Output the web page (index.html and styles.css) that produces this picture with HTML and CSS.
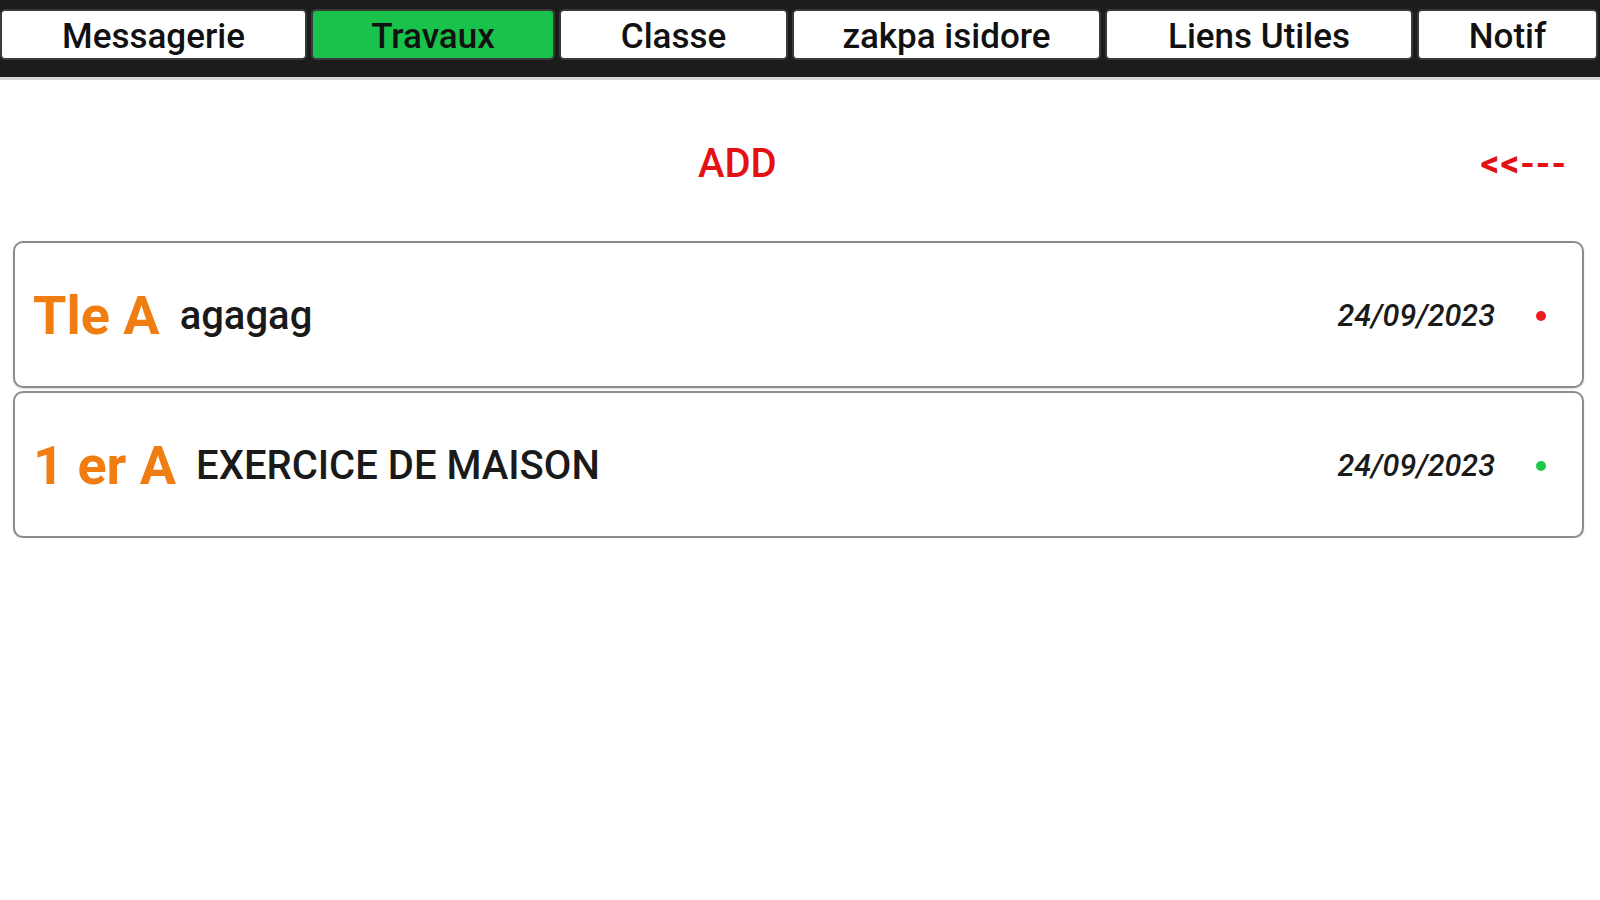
FILE: index.html
```html
<!DOCTYPE html>
<html lang="fr">
<head>
<meta charset="utf-8">
<title>Travaux</title>
<link rel="stylesheet" href="styles.css">
</head>
<body>
<nav class="tabs">
  <div class="tab tab-messagerie">Messagerie</div>
  <div class="tab tab-travaux active">Travaux</div>
  <div class="tab tab-classe">Classe</div>
  <div class="tab tab-profil">zakpa isidore</div>
  <div class="tab tab-liens">Liens Utiles</div>
  <div class="tab tab-notif">Notif</div>
</nav>
<main class="content">
  <div class="toolbar">
    <div class="add">ADD</div>
    <div class="back">&lt;&lt;---</div>
  </div>
  <div class="list">
    <div class="card">
      <span class="cls">Tle A</span>
      <span class="title">agagag</span>
      <span class="date">24/09/2023</span>
      <span class="dot red"></span>
    </div>
    <div class="card">
      <span class="cls">1 er A</span>
      <span class="title">EXERCICE DE MAISON</span>
      <span class="date">24/09/2023</span>
      <span class="dot green"></span>
    </div>
  </div>
</main>
</body>
</html>
```

FILE: styles.css
```css
* { box-sizing: border-box; }
html, body {
  margin: 0;
  padding: 0;
  background: #ffffff;
  font-family: Roboto, "Liberation Sans", sans-serif;
}
.tabs {
  display: flex;
  gap: 4px;
  background: #1c1c1c;
  padding: 9px 0 17px 0;
  overflow: hidden;
  white-space: nowrap;
  border-bottom: 3px solid #d6d6d6;
}
.tab {
  flex: none;
  height: 51px;
  padding: 5px 0 0 0;
  border: 2px solid #3a3a3a;
  border-radius: 5px;
  background: #ffffff;
  color: #111111;
  font-size: 35px;
  font-weight: 500;
  line-height: 42px;
  text-align: center;
}
.tab-messagerie { width: 307px; }
.tab-travaux { width: 244px; }
.tab-classe { width: 229px; }
.tab-profil { width: 309px; }
.tab-liens { width: 308px; }
.tab-notif { width: 181px; }
.tab.active {
  background: #19c24a;
}
.toolbar {
  display: flex;
  align-items: center;
  height: 48px;
  margin: 59px 0 54px 0;
}
.add {
  flex: 1;
  text-align: center;
  color: #e31111;
  font-size: 40px;
  font-weight: 500;
  padding-right: 6px;
}
.back {
  flex: none;
  margin-right: 33px;
  color: #e31111;
  font-size: 37px;
  font-weight: 700;
  letter-spacing: 1px;
}
.list {
  display: flex;
  flex-direction: column;
  gap: 3px;
  padding: 0 16px 0 13px;
}
.card {
  display: flex;
  align-items: center;
  height: 147px;
  padding: 2px 36px 0 18px;
  border: 2px solid #8c8c8c;
  border-radius: 10px;
  box-shadow: 0 1px 2px rgba(0,0,0,0.15);
  background: #ffffff;
}
.cls {
  color: #ef7d12;
  font-size: 54px;
  font-weight: 700;
  margin-right: 20px;
}
.title {
  flex: 1;
  color: #1a1a1a;
  font-size: 40px;
  font-weight: 500;
}
.date {
  color: #1a1a1a;
  font-size: 30.5px;
  font-style: italic;
  font-weight: 500;
  margin-right: 41px;
}
.dot {
  width: 10px;
  height: 10px;
  border-radius: 50%;
}
.dot.red { background: #ee1c1c; }
.dot.green { background: #1fc64a; }
```
